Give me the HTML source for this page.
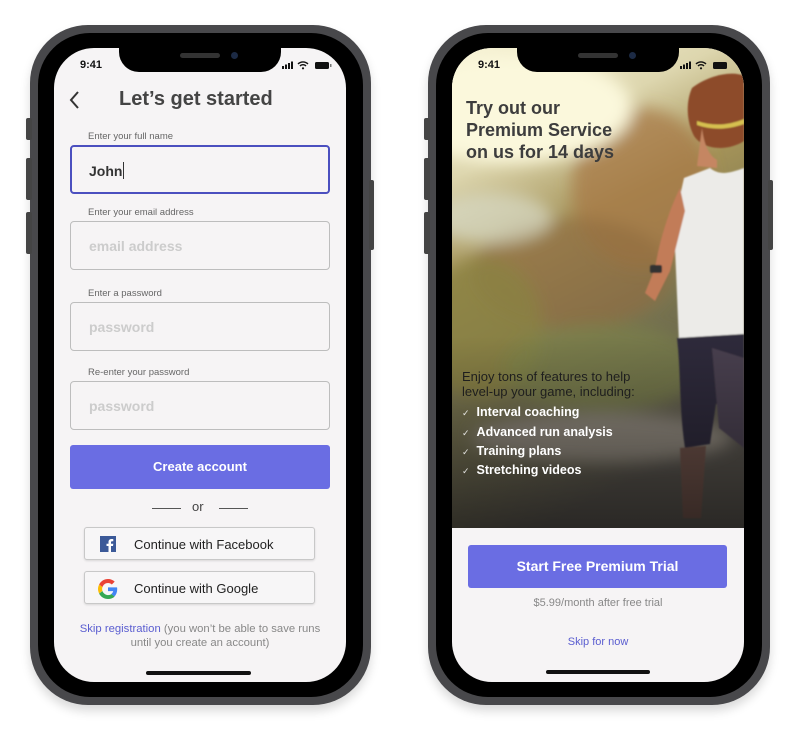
<!DOCTYPE html>
<html><head><meta charset="utf-8"><style>
*{margin:0;padding:0;box-sizing:border-box}
body{width:794px;height:732px;background:#fff;position:relative;overflow:hidden;font-family:"Liberation Sans",sans-serif}
.a{position:absolute}
.frame{position:absolute;border-radius:58px;background:#48484b;box-shadow:0 6px 10px rgba(0,0,0,.15)}
.bez{position:absolute;border-radius:52px;background:#000}
.scr{position:absolute;border-radius:40px;background:#f6f4f5;overflow:hidden}
.notch{position:absolute;background:#000;border-radius:0 0 20px 20px}
.lab{position:absolute;font-size:9.5px;color:#666}
.inp{position:absolute;left:16px;width:260px;height:49px;border:1.5px solid #bdbdbd;border-radius:4px;font-size:14px;font-weight:bold;color:#ccc;padding:16px 18px}
.sb{position:absolute;left:30px;width:231px;height:33px;border:1px solid #c8c8c8;border-radius:3px;background:#f7f6f7;font-size:13px;color:#222;box-shadow:0 1px 2px rgba(0,0,0,.12)}
.btn{position:absolute;background:#6a6de3;color:#fff;font-weight:bold;text-align:center;border-radius:3px}
.li{position:absolute;left:10px;color:#fff;font-size:12.5px;font-weight:bold}
.li span{font-size:9px;font-weight:normal;margin-right:7px;opacity:.85}
</style></head><body>

<!-- Phone 1 -->
<div class="frame" style="left:30px;top:25px;width:341px;height:680px"></div>
<div class="a" style="left:26px;top:118px;width:6px;height:22px;background:#444;border-radius:2px"></div>
<div class="a" style="left:26px;top:158px;width:6px;height:42px;background:#444;border-radius:2px"></div>
<div class="a" style="left:26px;top:212px;width:6px;height:42px;background:#444;border-radius:2px"></div>
<div class="a" style="left:369px;top:180px;width:5px;height:70px;background:#444;border-radius:2px"></div>
<div class="bez" style="left:38px;top:33px;width:325px;height:664px"></div>
<div class="scr" style="left:54px;top:48px;width:292px;height:634px">
  <div class="notch" style="left:65px;top:0;width:162px;height:24px"></div>
  <div class="a" style="left:126px;top:5px;width:40px;height:5px;background:#333;border-radius:3px"></div>
  <div class="a" style="left:177px;top:4px;width:7px;height:7px;background:#1c2a44;border-radius:50%"></div>
  <div class="a" style="left:26px;top:11px;font-size:11px;font-weight:bold;color:#111">9:41</div>
  <svg class="a" style="left:228px;top:13px" width="52" height="9"><rect x="0" y="5" width="2" height="3" fill="#111"/><rect x="3" y="3.5" width="2" height="4.5" fill="#111"/><rect x="6" y="2" width="2" height="6" fill="#111"/><rect x="9" y="0.5" width="2" height="7.5" fill="#111"/><path d="M16 3a7 7 0 0 1 10 0M18 5a4 4 0 0 1 6 0" stroke="#111" stroke-width="1.4" fill="none"/><circle cx="21" cy="7.3" r="1.1" fill="#111"/><rect x="33" y="1" width="14" height="7" rx="1.5" fill="#111"/><rect x="48" y="3" width="1.5" height="3" fill="#777"/></svg>
  <svg class="a" style="left:14px;top:42px" width="14" height="20"><path d="M10 2L3 10L10 18" stroke="#333" stroke-width="2" fill="none"/></svg>
  <div class="a" style="left:65px;top:40px;font-size:20px;font-weight:bold;color:#444">Let’s get started</div>
  <div class="lab" style="left:34px;top:83px">Enter your full name</div>
  <div class="inp" style="top:97px;border:2px solid #4b4fbf;color:#333;padding:15px 17px">John<span style="display:inline-block;width:1px;height:17px;background:#333;vertical-align:-3px;margin-left:1px"></span></div>
  <div class="lab" style="left:34px;top:159px">Enter your email address</div>
  <div class="inp" style="top:173px">email address</div>
  <div class="lab" style="left:34px;top:240px">Enter a password</div>
  <div class="inp" style="top:254px">password</div>
  <div class="lab" style="left:34px;top:319px">Re-enter your password</div>
  <div class="inp" style="top:333px">password</div>
  <div class="btn" style="left:16px;top:397px;width:260px;height:44px;font-size:13px;line-height:44px">Create account</div>
  <div class="a" style="left:98px;top:460px;width:29px;height:1px;background:#555"></div>
  <div class="a" style="left:138px;top:451px;font-size:13px;color:#444">or</div>
  <div class="a" style="left:165px;top:460px;width:29px;height:1px;background:#555"></div>
  <div class="sb" style="top:479px"><svg class="a" style="left:15px;top:8px" width="16" height="16"><rect width="16" height="16" fill="#3b5998"/><path d="M11 16V10h2l.3-2.3H11V6.3c0-.7.2-1.1 1.1-1.1h1.2V3.1c-.2 0-1-.1-1.8-.1-1.8 0-3 1.1-3 3.100V7.7H6.500V10h2V16z" fill="#fff"/></svg><span class="a" style="left:49px;top:9px">Continue with Facebook</span></div>
  <div class="sb" style="top:523px"><svg class="a" style="left:13px;top:7px" width="20" height="20" viewBox="0 0 48 48"><path fill="#EA4335" d="M24 9.5c3.5 0 6.7 1.2 9.2 3.6l6.9-6.9C35.9 2.4 30.5 0 24 0 14.6 0 6.6 5.4 2.7 13.3l8 6.2C12.6 13.600 17.900 9.5 24 9.5z"/><path fill="#4285F4" d="M46.1 24.5c0-1.600-.1-3.100-.4-4.500H24v9h12.400c-.5 2.900-2.200 5.300-4.700 7l7.600 5.900C43.700 37.800 46.100 31.700 46.100 24.500z"/><path fill="#FBBC05" d="M10.700 28.600c-.5-1.400-.8-3-.8-4.600s.3-3.200.8-4.600l-8-6.200C1 16.600 0 20.200 0 24s1 7.400 2.700 10.700z"/><path fill="#34A853" d="M24 48c6.500 0 11.900-2.100 15.900-5.800l-7.600-5.900c-2.100 1.400-4.900 2.300-8.300 2.300-6.100 0-11.400-4.100-13.300-9.700l-8 6.200C6.600 42.600 14.600 48 24 48z"/></svg><span class="a" style="left:49px;top:9px">Continue with Google</span></div>
  <div class="a" style="left:0;width:292px;top:575px;text-align:center;font-size:11.3px;color:#888;line-height:13.5px"><span style="color:#5a5dd0">Skip registration</span> (you won’t be able to save runs<br>until you create an account)</div>
  <div class="a" style="left:92px;top:623px;width:105px;height:4px;background:#111;border-radius:2px"></div>
</div>

<!-- Phone 2 -->
<div class="frame" style="left:428px;top:25px;width:342px;height:680px"></div>
<div class="a" style="left:424px;top:118px;width:6px;height:22px;background:#444;border-radius:2px"></div>
<div class="a" style="left:424px;top:158px;width:6px;height:42px;background:#444;border-radius:2px"></div>
<div class="a" style="left:424px;top:212px;width:6px;height:42px;background:#444;border-radius:2px"></div>
<div class="a" style="left:768px;top:180px;width:5px;height:70px;background:#444;border-radius:2px"></div>
<div class="bez" style="left:436px;top:33px;width:326px;height:664px"></div>
<div class="scr" style="left:452px;top:48px;width:292px;height:634px">
  <svg class="a" style="left:0;top:0" width="292" height="480">
    <defs>
      <linearGradient id="bg" x1="0" y1="0" x2="0.3" y2="1"><stop offset="0" stop-color="#f7f3d6"/><stop offset=".25" stop-color="#ddd6ae"/><stop offset=".45" stop-color="#a39258"/><stop offset=".7" stop-color="#76724f"/><stop offset="1" stop-color="#55514b"/></linearGradient>
      <linearGradient id="dk" x1="0" y1="0" x2="0" y2="1"><stop offset=".6" stop-color="#000" stop-opacity="0"/><stop offset="1" stop-color="#000" stop-opacity=".5"/></linearGradient>
      <filter id="bl"><feGaussianBlur stdDeviation="8"/></filter>
      <filter id="b2"><feGaussianBlur stdDeviation="0.8"/></filter>
    </defs>
    <rect width="292" height="480" fill="url(#bg)"/>
    <g filter="url(#bl)">
      <ellipse cx="190" cy="140" rx="70" ry="80" fill="#a87a45" opacity=".75"/>
      <ellipse cx="120" cy="225" rx="100" ry="55" fill="#8f6a40" opacity=".6"/>
      <ellipse cx="30" cy="280" rx="60" ry="70" fill="#8a8240" opacity=".75"/>
      <ellipse cx="150" cy="320" rx="100" ry="45" fill="#7b8247" opacity=".6"/>
      <ellipse cx="150" cy="390" rx="130" ry="25" fill="#8c857a"/>
      <ellipse cx="60" cy="60" rx="120" ry="55" fill="#fbf8dc"/>
      <ellipse cx="40" cy="170" rx="60" ry="25" fill="#d9dcc8" opacity=".7"/>
    </g>
    <g filter="url(#b2)">
      <path d="M240 40c15-12 40-18 52-12v65c-15 10-40 10-50-5-8-15-8-35-2-48z" fill="#8d4c2c"/>
      <path d="M245 73c15 5 30 5 47-2v5c-17 6-32 6-47 1z" fill="#d6c050"/>
      <path d="M250 80c2 18 8 28 15 32l0 8-20-2z" fill="#c58662"/>
      <path d="M258 120c10 8 20 5 34 0v170l-65 5-5-120 10-45z" fill="#ecebe8"/>
      <path d="M228 140c-10 20-20 50-25 80l-10 25 10 8 15-30 15-60z" fill="#c27c59"/>
      <rect x="198" y="217" width="12" height="8" rx="2" fill="#333"/>
      <path d="M225 290c4 35 2 70 8 110l25-4 6-40 28 0v-70z" fill="#2f2a3a"/>
      <path d="M228 400l3 70 18 0 5-72z" fill="#6b4f46"/>
      <path d="M260 300l32 10v90l-25-20z" fill="#4a4050"/>
    </g>
    <rect width="292" height="480" fill="url(#dk)"/>
  </svg>
  <div class="notch" style="left:65px;top:0;width:162px;height:24px"></div>
  <div class="a" style="left:126px;top:5px;width:40px;height:5px;background:#333;border-radius:3px"></div>
  <div class="a" style="left:177px;top:4px;width:7px;height:7px;background:#1c2a44;border-radius:50%"></div>
  <div class="a" style="left:26px;top:11px;font-size:11px;font-weight:bold;color:#111">9:41</div>
  <svg class="a" style="left:228px;top:13px" width="52" height="9"><rect x="0" y="5" width="2" height="3" fill="#111"/><rect x="3" y="3.5" width="2" height="4.5" fill="#111"/><rect x="6" y="2" width="2" height="6" fill="#111"/><rect x="9" y="0.5" width="2" height="7.5" fill="#111"/><path d="M16 3a7 7 0 0 1 10 0M18 5a4 4 0 0 1 6 0" stroke="#111" stroke-width="1.4" fill="none"/><circle cx="21" cy="7.3" r="1.1" fill="#111"/><rect x="33" y="1" width="14" height="7" rx="1.5" fill="#111"/></svg>
  <div class="a" style="left:14px;top:49px;font-size:18px;font-weight:bold;color:#3d3d3d;line-height:22px">Try out our<br>Premium Service<br>on us for 14 days</div>
  <div class="a" style="left:10px;top:321px;font-size:13px;color:#1e1e1e;line-height:15px">Enjoy tons of features to help<br>level-up your game, including:</div>
  <div class="li" style="top:357px"><span>✓</span>Interval coaching</div>
  <div class="li" style="top:377px"><span>✓</span>Advanced run analysis</div>
  <div class="li" style="top:396px"><span>✓</span>Training plans</div>
  <div class="li" style="top:415px"><span>✓</span>Stretching videos</div>
  <div class="btn" style="left:16px;top:497px;width:259px;height:43px;font-size:14px;line-height:43px">Start Free Premium Trial</div>
  <div class="a" style="left:0;width:292px;top:549px;text-align:center;font-size:11px;color:#888">$5.99/month after free trial</div>
  <div class="a" style="left:0;width:292px;top:588px;text-align:center;font-size:11px;color:#5a5dd0">Skip for now</div>
  <div class="a" style="left:94px;top:622px;width:104px;height:4px;background:#111;border-radius:2px"></div>
</div>
</body></html>
